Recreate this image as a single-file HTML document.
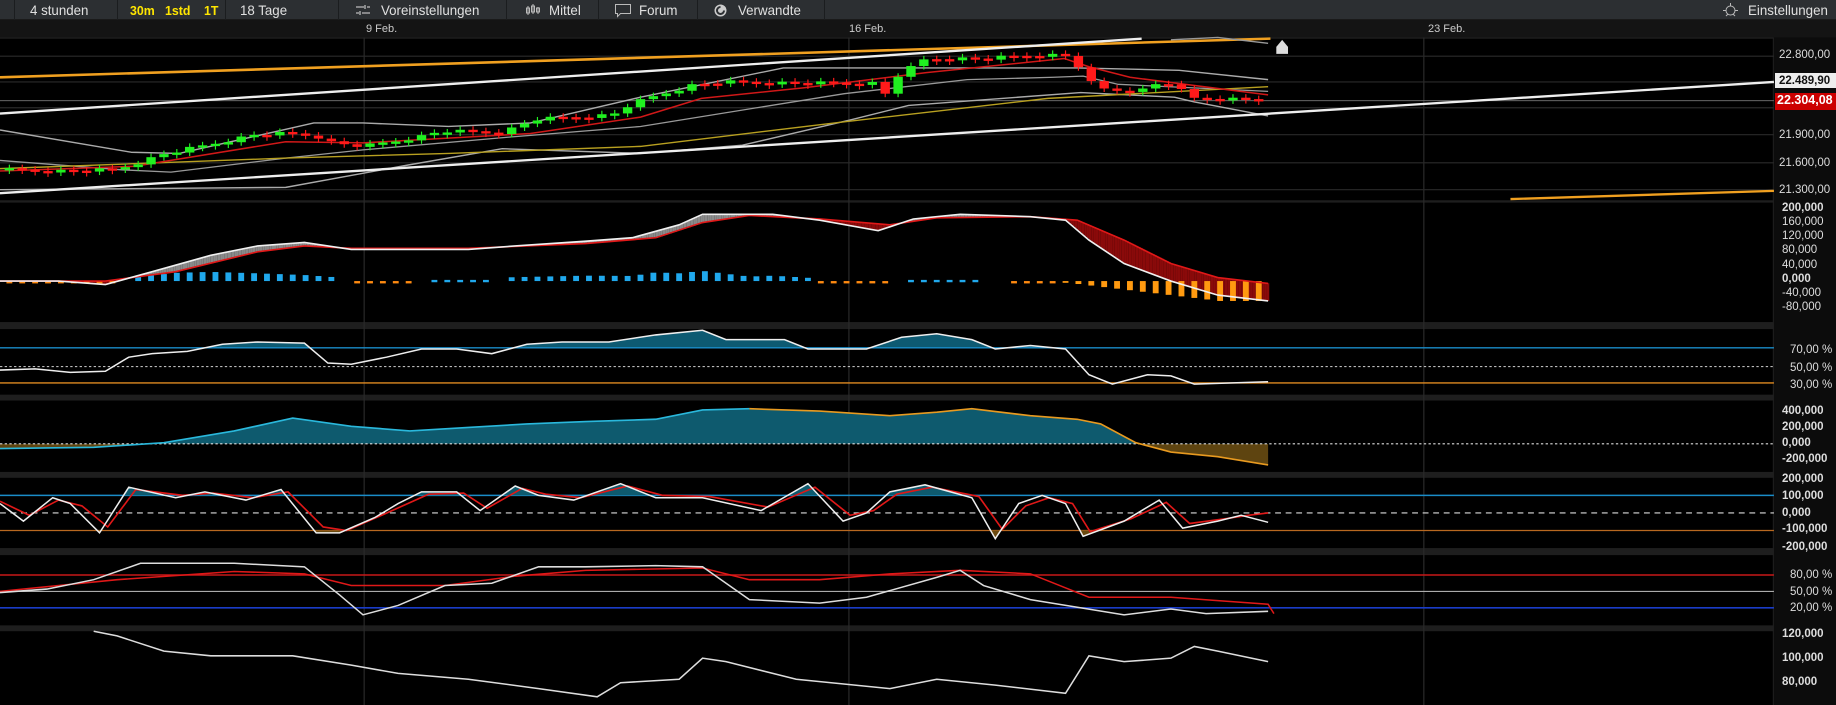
<!DOCTYPE html>
<html><head><meta charset="utf-8">
<style>
*{margin:0;padding:0;box-sizing:border-box}
body{width:1836px;height:705px;background:#000;overflow:hidden;position:relative;font-family:"Liberation Sans",sans-serif}
.t{position:absolute;white-space:nowrap}
#tb{position:absolute;left:0;top:0;width:1836px;height:20px;background:#2c2f32;border-bottom:1px solid #1a1a1a}
.tb{position:absolute;top:2px;font-size:14px;color:#e0e0e0;transform:scaleX(.95);transform-origin:left}
.y{color:#ffe600;font-weight:bold;font-size:13px}
.sep{position:absolute;top:0;width:1px;height:20px;background:#1b1d1f}
#dr{position:absolute;left:0;top:20px;width:1836px;height:18px;background:#141414}
.d{position:absolute;top:23px;font-size:11px;color:#ccc}
.ax{position:absolute;font-size:11.5px;color:#ddd;transform:translateY(-50%)}
.b{font-weight:bold}
</style></head><body>
<div id="tb"></div>
<div class="sep" style="left:14px"></div><div class="sep" style="left:117px"></div><div class="sep" style="left:225px"></div><div class="sep" style="left:338px"></div><div class="sep" style="left:506px"></div><div class="sep" style="left:598px"></div><div class="sep" style="left:697px"></div><div class="sep" style="left:824px"></div>
<div class="tb" style="left:30px">4 stunden</div>
<div class="tb y" style="left:130px;top:3px">30m</div>
<div class="tb y" style="left:165px;top:3px">1std</div>
<div class="tb y" style="left:204px;top:3px">1T</div>
<div class="tb" style="left:240px">18 Tage</div>
<svg class="t" style="left:355px;top:3px" width="16" height="14"><path d="M1 4h8M12 4h3M1 10h3M7 10h8M10 2v4M5 8v4" stroke="#bbb" stroke-width="1.3" fill="none"/></svg>
<div class="tb" style="left:381px">Voreinstellungen</div>
<svg class="t" style="left:525px;top:2px" width="16" height="15"><path d="M3 4v9M8 2v10M13 5v7" stroke="#bbb" fill="none"/><rect x="1.5" y="6" width="3" height="5" fill="none" stroke="#bbb"/><rect x="6.5" y="4" width="3" height="6" fill="none" stroke="#bbb"/><rect x="11.5" y="6" width="3" height="4" fill="none" stroke="#bbb"/></svg>
<div class="tb" style="left:549px">Mittel</div>
<svg class="t" style="left:614px;top:3px" width="18" height="15"><path d="M1.5 1.5h15v9h-10l-3 3v-3h-2z" stroke="#bbb" fill="none"/></svg>
<div class="tb" style="left:639px">Forum</div>
<svg class="t" style="left:713px;top:3px" width="15" height="15"><circle cx="7.5" cy="7.5" r="6" fill="#ccc"/><path d="M7.5 4a3.5 3.5 0 1 0 3.5 3.5" stroke="#2c2f32" stroke-width="2" fill="none"/></svg>
<div class="tb" style="left:738px">Verwandte</div>
<svg class="t" style="left:1723px;top:3px" width="15" height="15"><circle cx="7.5" cy="7.5" r="4.5" stroke="#bbb" fill="none"/><path d="M7.5 0v3M0 7.5h3M12 7.5h3M3 13l2-2M12 13l-2-2" stroke="#bbb"/></svg>
<div class="tb" style="left:1748px">Einstellungen</div>
<div id="dr"></div>
<div class="d" style="left:366px">9 Feb.</div>
<div class="d" style="left:849px">16 Feb.</div>
<div class="d" style="left:1428px">23 Feb.</div>

<svg id="c" class="t" style="left:0;top:0" width="1836" height="705" viewBox="0 0 1568 602" preserveAspectRatio="none">
<defs>
<clipPath id="rsiA"><rect x="0" y="281" width="1515" height="16"/></clipPath>
<clipPath id="p4a"><rect x="0" y="342" width="1515" height="37"/></clipPath>
<clipPath id="p4b"><rect x="0" y="379" width="1515" height="24"/></clipPath>
<clipPath id="p5a"><rect x="0" y="408" width="1515" height="15"/></clipPath>
<clipPath id="p5b"><rect x="0" y="453" width="1515" height="15"/></clipPath>
</defs>
<rect x="0" y="32" width="1568" height="1" fill="#222"/>
<rect x="0" y="171" width="1568" height="2" fill="#1e1e1e"/>
<rect x="0" y="275" width="1568" height="6" fill="#1e1e1e"/>
<rect x="0" y="337" width="1568" height="5" fill="#1e1e1e"/>
<rect x="0" y="403" width="1568" height="5" fill="#1e1e1e"/>
<rect x="0" y="468" width="1568" height="6" fill="#1e1e1e"/>
<rect x="0" y="534" width="1568" height="5" fill="#1e1e1e"/>
<rect x="1515" y="32" width="53" height="570" fill="#0c0c0c"/>
<rect x="1514" y="32" width="1" height="570" fill="#1e1e1e"/>
<g stroke="#2a2a2a" stroke-width="1">
<line x1="311" y1="32" x2="311" y2="602"/><line x1="725" y1="32" x2="725" y2="602"/><line x1="1216" y1="32" x2="1216" y2="602"/>
<line x1="0" y1="48" x2="1515" y2="48"/><line x1="0" y1="70" x2="1515" y2="70"/><line x1="0" y1="92" x2="1515" y2="92"/><line x1="0" y1="115" x2="1515" y2="115"/><line x1="0" y1="139" x2="1515" y2="139"/><line x1="0" y1="162" x2="1515" y2="162"/>
</g>
<line x1="0" y1="86" x2="1515" y2="86" stroke="#777" stroke-width=".8"/>
<g fill="none" stroke-linejoin="round">
<polyline stroke="#aaa" stroke-width="1.2" points="0,111 112,130 153,131 268,105 310,105 383,108 453,105 547,83 669,58 920,58 1007,60 1083,68"/>
<polyline stroke="#999" stroke-width="1.1" points="0,137 104,145 146,147 244,135 310,128 436,117 547,108 721,80 826,68 900,66 925,65 955,72 1083,78"/>
<polyline stroke="#aaa" stroke-width="1.2" points="0,162 244,160 348,141 429,127 547,131 634,124 728,102 776,90 923,79 1003,83 1020,87 1083,99"/>
<polyline stroke="#b8a020" stroke-width="1.2" points="0,144 244,135 383,131 547,125 721,104 895,84 1083,74"/>
<polyline stroke="#d01818" stroke-width="1.3" points="0,146 115,142 244,121 310,122 453,114 547,100 599,84 686,75 791,62 909,50 930,57 965,66 1083,81"/>
<line x1="0" y1="66" x2="1085" y2="33" stroke="#f0a020" stroke-width="2.2"/>
<polyline stroke="#999" stroke-width="1.2" points="1000,34 1040,32 1083,37"/>
<line x1="0" y1="97" x2="975" y2="33" stroke="#eee" stroke-width="2"/>
<line x1="0" y1="165" x2="1515" y2="70" stroke="#eee" stroke-width="2"/>
<line x1="1290" y1="170" x2="1515" y2="163" stroke="#f0a020" stroke-width="2"/>
</g>
<g id="candles"></g>
<path d="M1090 40l5-6 5 6v6h-10z" fill="#ddd"/>
<g id="macd"></g>
<polygon clip-path="url(#rsiA)" fill="#0d5a72" points="0,316 30,315 60,318 90,317 110,305 130,302 160,300 190,294 220,292 260,293 280,310 300,311 330,305 360,298 390,298 420,302 450,294 480,292 520,292 560,286 600,282 620,290 670,290 690,298 740,298 770,288 800,285 830,290 850,298 880,295 910,298 930,320 950,328 980,320 1000,321 1020,328 1083,326 1083,337 0,337"/>
<line x1="0" y1="297" x2="1515" y2="297" stroke="#1a8cc8" stroke-width="1.2"/>
<line x1="0" y1="313" x2="1515" y2="313" stroke="#bbb" stroke-width="1" stroke-dasharray="2,2"/>
<line x1="0" y1="327" x2="1515" y2="327" stroke="#e08a20" stroke-width="1.2"/>
<polyline fill="none" stroke="#eee" stroke-width="1.3" points="0,316 30,315 60,318 90,317 110,305 130,302 160,300 190,294 220,292 260,293 280,310 300,311 330,305 360,298 390,298 420,302 450,294 480,292 520,292 560,286 600,282 620,290 670,290 690,298 740,298 770,288 800,285 830,290 850,298 880,295 910,298 930,320 950,328 980,320 1000,321 1020,328 1083,326"/>
<polygon clip-path="url(#p4a)" fill="#0e5a6e" points="0,383 80,382 140,378 200,368 250,357 300,364 350,368 400,365 450,362 500,360 560,358 600,350 640,349 700,351 760,355 800,352 830,349 880,355 920,358 940,362 970,378 1000,386 1040,390 1083,397 1083,379 0,379"/>
<polygon clip-path="url(#p4b)" fill="#5e4410" points="0,383 80,382 140,378 200,368 250,357 300,364 350,368 400,365 450,362 500,360 560,358 600,350 640,349 700,351 760,355 800,352 830,349 880,355 920,358 940,362 970,378 1000,386 1040,390 1083,397 1083,379 0,379"/>
<line x1="0" y1="379" x2="1515" y2="379" stroke="#ddd" stroke-width="1" stroke-dasharray="2,2"/>
<polyline fill="none" stroke="#2ab8dc" stroke-width="1.4" points="0,383 80,382 140,378 200,368 250,357 300,364 350,368 400,365 450,362 500,360 560,358 600,350 640,349"/>
<polyline fill="none" stroke="#e89a20" stroke-width="1.4" points="640,349 700,351 760,355 800,352 830,349 880,355 920,358 940,362 970,378 1000,386 1040,390 1083,397"/>
<line x1="0" y1="423" x2="1515" y2="423" stroke="#1a8cc8" stroke-width="1.2"/>
<line x1="0" y1="438" x2="1515" y2="438" stroke="#ddd" stroke-width="1" stroke-dasharray="5,4"/>
<line x1="0" y1="453" x2="1515" y2="453" stroke="#b86820" stroke-width="1"/>
<polygon clip-path="url(#p5a)" fill="#0e5a6e" points="0,430 20,445 45,425 60,430 85,455 110,416 150,425 175,420 210,427 240,418 270,455 290,455 320,442 340,430 360,420 390,420 410,436 440,415 460,423 490,427 530,413 560,425 600,425 650,436 690,413 720,445 740,438 760,420 790,414 830,425 850,460 870,430 890,423 910,430 925,458 960,445 990,427 1010,451 1040,445 1060,440 1083,446 1083,468 0,468"/>
<polygon clip-path="url(#p5b)" fill="#6b4a10" points="0,430 20,445 45,425 60,430 85,455 110,416 150,425 175,420 210,427 240,418 270,455 290,455 320,442 340,430 360,420 390,420 410,436 440,415 460,423 490,427 530,413 560,425 600,425 650,436 690,413 720,445 740,438 760,420 790,414 830,425 850,460 870,430 890,423 910,430 925,458 960,445 990,427 1010,451 1040,445 1060,440 1083,446 1083,408 0,408"/>
<polyline fill="none" stroke="#e01818" stroke-width="1.4" points="0,428 25,440 50,427 70,432 92,450 116,418 156,423 182,421 216,425 246,420 276,450 296,453 326,440 346,431 366,422 396,421 416,434 446,417 466,422 496,425 536,415 566,423 606,424 656,433 696,416 726,440 746,436 766,422 796,416 836,424 856,452 876,432 896,425 916,430 931,454 966,443 996,429 1016,447 1046,443 1066,440 1083,438"/>
<polyline fill="none" stroke="#eee" stroke-width="1.3" points="0,430 20,445 45,425 60,430 85,455 110,416 150,425 175,420 210,427 240,418 270,455 290,455 320,442 340,430 360,420 390,420 410,436 440,415 460,423 490,427 530,413 560,425 600,425 650,436 690,413 720,445 740,438 760,420 790,414 830,425 850,460 870,430 890,423 910,430 925,458 960,445 990,427 1010,451 1040,445 1060,440 1083,446"/>
<line x1="0" y1="491" x2="1515" y2="491" stroke="#c81818" stroke-width="1.2"/>
<line x1="0" y1="505" x2="1515" y2="505" stroke="#aaa" stroke-width="1"/>
<line x1="0" y1="519" x2="1515" y2="519" stroke="#1a3cc8" stroke-width="1.4"/>
<polyline fill="none" stroke="#e01818" stroke-width="1.3" points="0,505 100,495 200,488 260,490 300,500 380,500 440,492 500,487 600,485 640,495 700,495 760,490 820,487 880,490 930,510 1000,510 1083,516 1088,524"/>
<polyline fill="none" stroke="#ddd" stroke-width="1.3" points="0,506 40,503 80,495 120,481 200,481 260,484 290,508 310,525 340,517 380,500 420,498 460,484 500,484 560,483 600,484 640,512 700,515 740,510 800,493 820,487 840,500 880,512 960,525 1000,520 1030,524 1083,522"/>
<polyline fill="none" stroke="#ddd" stroke-width="1.3" points="80,539 100,543 140,556 180,560 250,560 300,568 340,575 400,580 460,588 510,595 530,583 580,580 600,562 620,565 680,580 760,588 800,580 850,585 910,592 930,560 960,565 1000,562 1020,552 1040,556 1083,565"/>
</svg>

<div class="ax" style="left:1779px;top:55px">22.800,00</div>
<div class="t" style="left:1775px;top:73px;width:61px;height:15px;background:#eee"></div>
<div class="ax b" style="left:1779px;top:81px;color:#111">22.489,90</div>
<div class="t" style="left:1775px;top:93px;width:61px;height:17px;background:#c00"></div>
<div class="ax b" style="left:1777px;top:100px;color:#fff;font-size:12.5px">22.304,08</div>
<div class="ax" style="left:1779px;top:135px">21.900,00</div>
<div class="ax" style="left:1779px;top:163px">21.600,00</div>
<div class="ax" style="left:1779px;top:190px">21.300,00</div>
<div class="ax b" style="left:1782px;top:208px">200,000</div>
<div class="ax" style="left:1782px;top:222px">160,000</div>
<div class="ax" style="left:1782px;top:236px">120,000</div>
<div class="ax" style="left:1782px;top:250px">80,000</div>
<div class="ax" style="left:1782px;top:265px">40,000</div>
<div class="ax b" style="left:1782px;top:279px">0,000</div>
<div class="ax" style="left:1782px;top:293px">-40,000</div>
<div class="ax" style="left:1782px;top:307px">-80,000</div>
<div class="ax" style="left:1790px;top:350px">70,00 %</div>
<div class="ax" style="left:1790px;top:368px">50,00 %</div>
<div class="ax" style="left:1790px;top:385px">30,00 %</div>
<div class="ax b" style="left:1782px;top:411px">400,000</div>
<div class="ax b" style="left:1782px;top:427px">200,000</div>
<div class="ax b" style="left:1782px;top:443px">0,000</div>
<div class="ax b" style="left:1782px;top:459px">-200,000</div>
<div class="ax b" style="left:1782px;top:479px">200,000</div>
<div class="ax b" style="left:1782px;top:496px">100,000</div>
<div class="ax b" style="left:1782px;top:513px">0,000</div>
<div class="ax b" style="left:1782px;top:529px">-100,000</div>
<div class="ax b" style="left:1782px;top:547px">-200,000</div>
<div class="ax" style="left:1790px;top:575px">80,00 %</div>
<div class="ax" style="left:1790px;top:592px">50,00 %</div>
<div class="ax" style="left:1790px;top:608px">20,00 %</div>
<div class="ax b" style="left:1782px;top:634px">120,000</div>
<div class="ax b" style="left:1782px;top:658px">100,000</div>
<div class="ax b" style="left:1782px;top:682px">80,000</div>

<script>
(function(){
var NS="http://www.w3.org/2000/svg";
function el(n,a){var e=document.createElementNS(NS,n);for(var k in a)e.setAttribute(k,a[k]);return e;}
function interp(pts,x){if(x<=pts[0][0])return pts[0][1];for(var i=1;i<pts.length;i++){if(x<=pts[i][0]){var a=pts[i-1],b=pts[i];return a[1]+(b[1]-a[1])*(x-a[0])/(b[0]-a[0]);}}return pts[pts.length-1][1];}
var P=[[5,145],[50,146],[98,145],[124,137],[138,132],[190,121],[218,115],[244,114],[270,116],[284,122],[310,125],[340,120],[362,116],[376,112],[429,113],[457,102],[490,100],[523,98],[537,90],[550,85],[590,73],[616,70],[686,71],[749,71],[756,80],[763,67],[791,50],[843,50],[881,47],[909,47],[923,58],[935,75],[950,77],[975,77],[989,71],[1003,71],[1015,84],[1031,84],[1083,85]];
var g=document.getElementById("candles");var prev=145;
for(var i=0;i<98;i++){var x=8+i*11;var c=interp(P,x);var o=prev;
 var jitter=((i*37)%7-3)*0.5;var cc=c+jitter;
 var up=cc<o-0.3;var col=up?"#20f020":"#ff1a1a";
 var top=Math.min(o,cc),h=Math.max(Math.abs(o-cc),2);
 g.appendChild(el("line",{x1:x,y1:top-3,x2:x,y2:top+h+3,stroke:col,"stroke-width":1}));
 g.appendChild(el("rect",{x:x-4,y:top,width:8,height:h,fill:col}));
 prev=cc;}
var m=document.getElementById("macd");
var W=[[0,240],[50,240],[90,243],[130,232],[180,218],[220,210],[260,207],[300,213],[400,213],[440,210],[500,206],[540,203],[580,192],[600,183],[660,183],[700,188],[750,197],[780,187],[820,183],[880,185],[910,188],[930,205],[960,225],[1000,240],[1040,252],[1083,257]];
var R=[[0,240],[90,240],[150,232],[220,215],[260,210],[300,212],[400,212],[500,208],[560,203],[600,190],[640,184],[700,187],[760,192],[800,186],[880,185],[920,188],[960,205],[1000,225],[1040,237],[1083,242]];
for(var x=0;x<1083;x+=2){var w=interp(W,x),r=interp(R,x);m.appendChild(el("rect",{x:x,y:Math.min(w,r),width:2,height:Math.abs(w-r)+0.1,fill:w<r?"#8a8a8a":"#8a0a0a"}));}
for(var x=8;x<1083;x+=11){var w=interp(W,x),r=interp(R,x);var d=(r-w)*0.9;var col,y,h;
 if(x>900){col="#ff9a10";h=Math.max(Math.min((x-900)*0.12,17),1.5);y=240;}
 else if(x>110&&x<290){col="#20a8ec";h=Math.max(Math.min(d>0?d*0.8+3:2,11),2);y=240-h;}
 else if(x>430&&x<700){col="#20a8ec";h=Math.max(Math.min(d*0.9+3,10),2);y=240-h;}
 else if(x>770&&x<840){col="#20a8ec";h=2;y=239;}
 else if(x<100||(x>300&&x<360)||(x>700&&x<760)||(x>860&&x<900)){col="#ff8a10";h=2;y=240;}
 else if(x>360&&x<420){col="#20a8ec";h=2;y=239;}
 else continue;
 m.appendChild(el("rect",{x:x-2.5,y:y,width:5,height:h,fill:col}));}
function pl(pts,col){m.appendChild(el("polyline",{points:pts.map(function(p){return p.join(",")}).join(" "),fill:"none",stroke:col,"stroke-width":1.4}));}
pl(R,"#e01818");pl(W,"#f0f0f0");
})();
</script>
</body></html>
